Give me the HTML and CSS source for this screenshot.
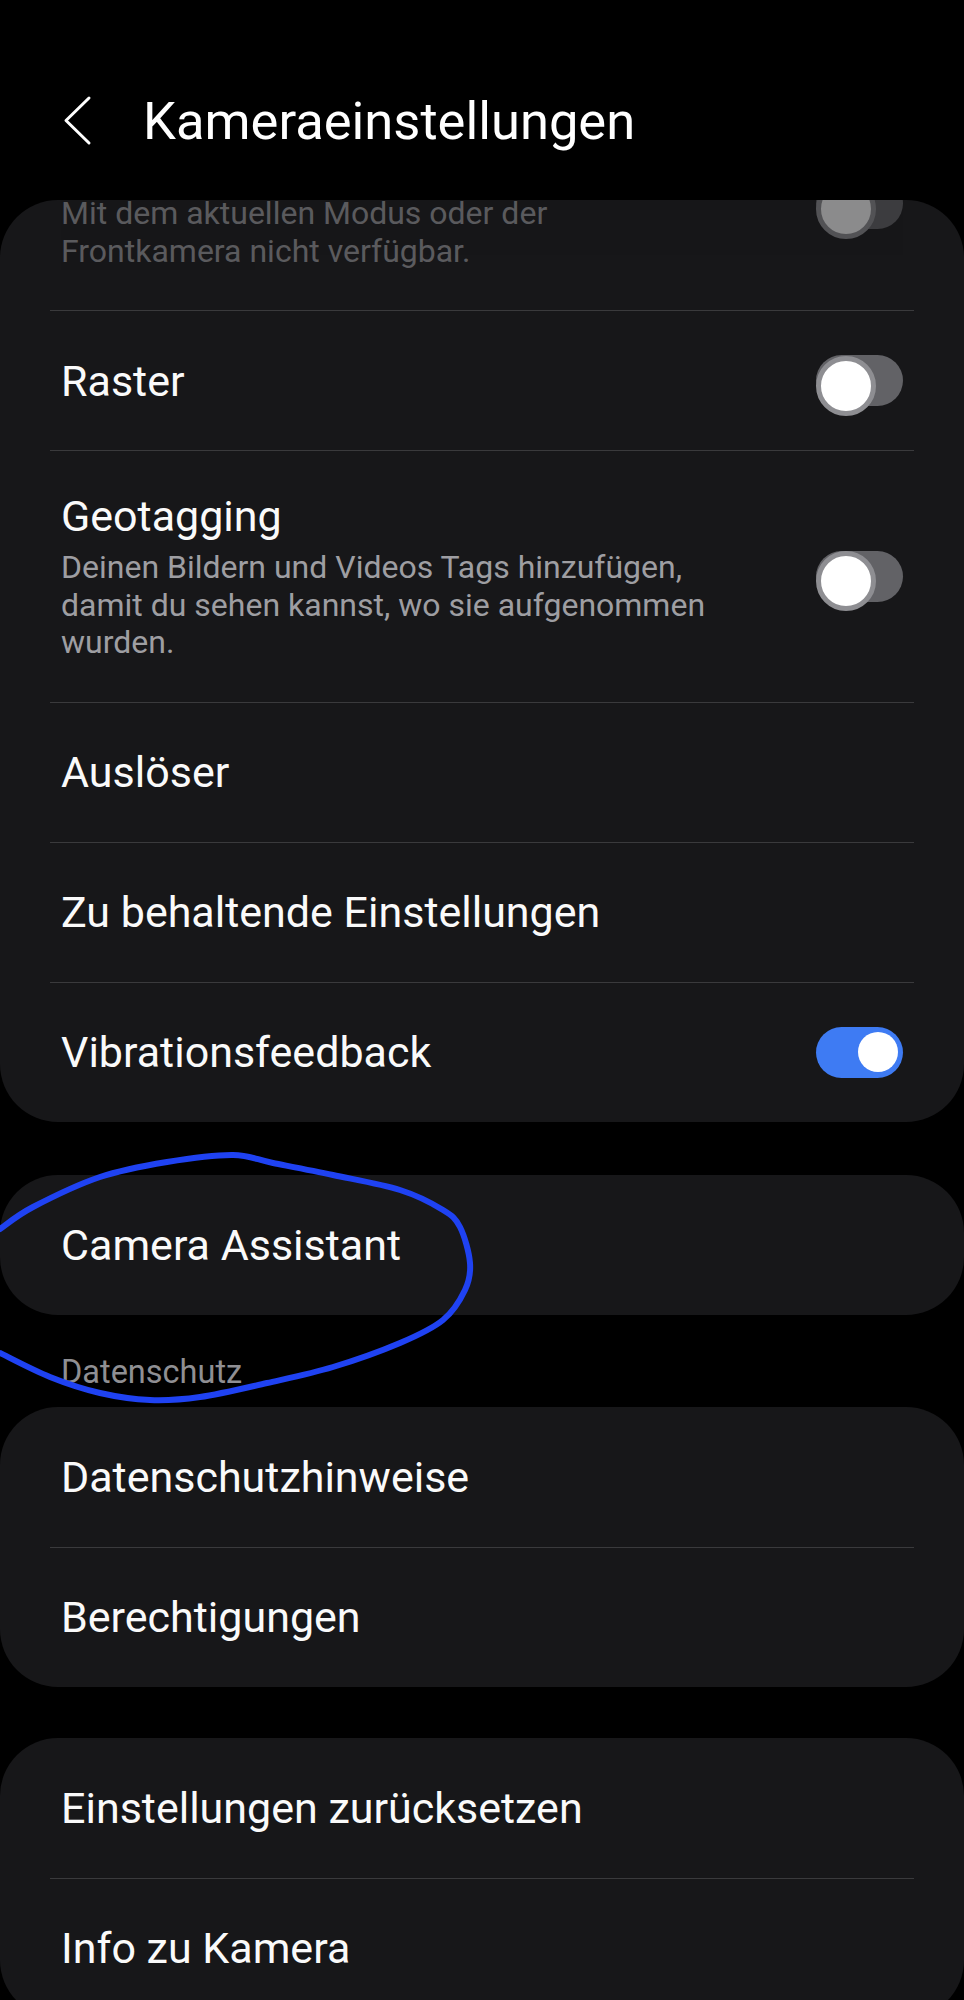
FILE: index.html
```html
<!DOCTYPE html>
<html lang="de">
<head>
<meta charset="utf-8">
<title>Kameraeinstellungen</title>
<link rel="stylesheet" href="styles.css">
</head>
<body>
<header class="appbar">
  <svg class="back" width="40" height="60" viewBox="0 0 40 60" aria-label="Zurück">
    <polyline points="33,7 10,29.5 33,52" fill="none" stroke="#ffffff" stroke-width="3" stroke-linecap="round" stroke-linejoin="round"/>
  </svg>
  <h1 class="title">Kameraeinstellungen</h1>
</header>

<main class="content">
  <section class="card card-scrolled">
    <div class="row row-two row-disabled">
      <div class="text text-scrolled">
        <div class="desc">Mit dem aktuellen Modus oder der<br>Frontkamera nicht verfügbar.</div>
      </div>
      <span class="switch"></span>
    </div>
    <div class="row">
      <div class="label">Raster</div>
      <span class="switch"></span>
    </div>
    <div class="row row-two">
      <div class="text">
        <div class="label">Geotagging</div>
        <div class="desc">Deinen Bildern und Videos Tags hinzufügen,<br>damit du sehen kannst, wo sie aufgenommen<br>wurden.</div>
      </div>
      <span class="switch"></span>
    </div>
    <div class="row">
      <div class="label">Auslöser</div>
    </div>
    <div class="row">
      <div class="label">Zu behaltende Einstellungen</div>
    </div>
    <div class="row">
      <div class="label">Vibrationsfeedback</div>
      <span class="switch on"></span>
    </div>
  </section>

  <section class="card card-single">
    <div class="row">
      <div class="label">Camera Assistant</div>
    </div>
  </section>

  <div class="section-label">Datenschutz</div>

  <section class="card card-tight">
    <div class="row">
      <div class="label">Datenschutzhinweise</div>
    </div>
    <div class="row">
      <div class="label">Berechtigungen</div>
    </div>
  </section>

  <section class="card">
    <div class="row">
      <div class="label">Einstellungen zurücksetzen</div>
    </div>
    <div class="row">
      <div class="label">Info zu Kamera</div>
    </div>
  </section>
</main>

<svg class="annotation" width="500" height="280" viewBox="0 1140 500 280">
  <path d="M0 1229 C5.5 1225.3 16.3 1215.7 33 1207 C49.7 1198.3 77.7 1184.5 100 1177 C122.3 1169.5 144.8 1165.7 167 1162 C189.2 1158.3 215.3 1154.8 233 1155 C250.7 1155.2 256.3 1159.7 273 1163 C289.7 1166.3 311.8 1170.5 333 1175 C354.2 1179.5 381.7 1184.2 400 1190 C418.3 1195.8 433 1203.8 443 1210 C453 1216.2 455.5 1218.2 460 1227 C464.5 1235.8 469.2 1252.5 470 1263 C470.8 1273.5 469.5 1280.5 465 1290 C460.5 1299.5 453.8 1311.2 443 1320 C432.2 1328.8 418.3 1335.2 400 1343 C381.7 1350.8 355.2 1360.3 333 1367 C310.8 1373.7 289.2 1378 267 1383 C244.8 1388 219.5 1394.2 200 1397 C180.5 1399.8 166.7 1400.7 150 1400 C133.3 1399.3 116.7 1396.8 100 1393 C83.3 1389.2 66.7 1383.7 50 1377 C33.3 1370.3 8.3 1357 0 1353" fill="none" stroke="#1f42f2" stroke-width="6" stroke-linecap="round" stroke-linejoin="round"/>
</svg>
</body>
</html>
```

FILE: styles.css
```css
* {
  box-sizing: border-box;
}

html, body {
  margin: 0;
  padding: 0;
  background: #000000;
}

body {
  position: relative;
  width: 964px;
  font-family: Roboto, "Liberation Sans", sans-serif;
  color: #fafafa;
  overflow: hidden;
}

.appbar {
  height: 200px;
  display: flex;
  align-items: flex-start;
  padding: 89px 0 0 56px;
}

.back {
  flex: none;
  margin-top: 2px;
}

.title {
  margin: 0 0 0 47px;
  font-size: 52.5px;
  line-height: 64px;
  font-weight: 400;
  color: #ffffff;
}

.content {
  display: flex;
  flex-direction: column;
}

.card {
  background: #171719;
  border-radius: 58px;
  padding: 0 50px;
  overflow: hidden;
}

.card-single {
  margin-top: 53px;
}

.card-tight + .card {
  margin-top: 51px;
}

.card-scrolled .row:first-child {
  margin-top: -103px;
}

.row {
  display: flex;
  align-items: center;
  justify-content: space-between;
  gap: 24px;
  min-height: 140px;
  padding: 0 11px;
}

.row + .row {
  border-top: 1px solid #3a3a3c;
}

.row-two {
  padding-top: 40px;
  padding-bottom: 40px;
}

.row-disabled {
  opacity: 0.5;
}

.text-scrolled {
  padding-top: 50px;
}

.label {
  font-size: 43px;
  line-height: 50px;
  color: #fafafa;
}

.desc {
  margin-top: 8px;
  font-size: 32px;
  line-height: 37.5px;
  color: #9e9ea2;
}

.section-label {
  padding: 39px 61px 17px;
  font-size: 32.5px;
  line-height: 36px;
  color: #8f8f93;
}

.switch {
  position: relative;
  flex: none;
  width: 87px;
  height: 51px;
  border-radius: 26px;
  background: #626266;
}

.switch::after {
  content: "";
  position: absolute;
  left: 0;
  top: 0.5px;
  width: 50px;
  height: 50px;
  border: 5px solid #8e8e92;
  border-radius: 50%;
  background: #ffffff;
}

.switch.on {
  background: #3e7bf3;
}

.switch.on::after {
  left: auto;
  right: 5px;
  top: 5.5px;
  width: 40px;
  height: 40px;
  border: none;
}

.annotation {
  position: absolute;
  left: 0;
  top: 1140px;
  pointer-events: none;
}
```
